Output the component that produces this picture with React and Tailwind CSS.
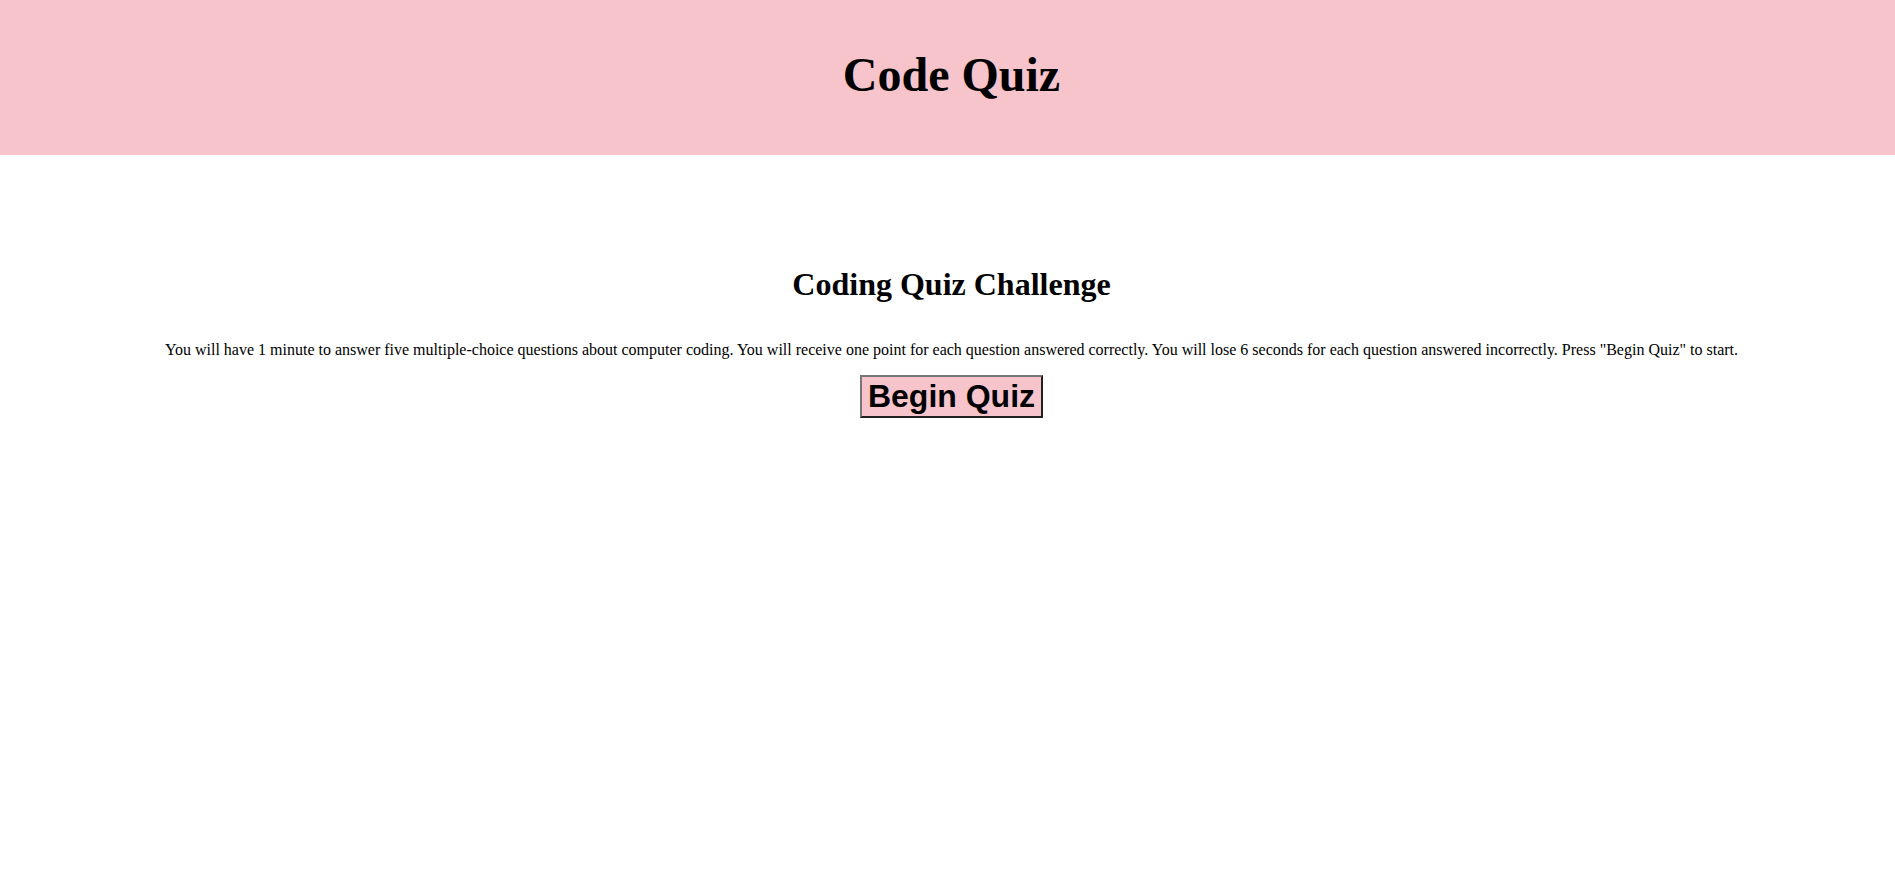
export default function App() {
  return (
    <div className="min-h-screen bg-white text-black font-['Liberation_Serif',serif]">
      {/* Header */}
      <header className="bg-[#f7c4cc] pt-[48px] pb-[54px] pl-2 text-center">
        <h1 className="text-[48px] leading-[53px] font-bold">Code Quiz</h1>
      </header>

      {/* Intro */}
      <main className="pt-[112px] pl-2 text-center">
        <h2 className="text-[32px] leading-[35px] font-bold">Coding Quiz Challenge</h2>
        <p className="mt-[39px] text-base leading-[18px] whitespace-nowrap">
          You will have 1 minute to answer five multiple-choice questions about computer coding. You will
          receive one point for each question answered correctly. You will lose 6 seconds for each question
          answered incorrectly. Press "Begin Quiz" to start.
        </p>
        <button className="mt-[16px] bg-[#f7c4cc] border-2 [border-style:outset] border-[#767676] px-[6px] py-px font-['Liberation_Sans',Arial,sans-serif] font-bold text-[32px] leading-[37px]">
          Begin Quiz
        </button>
      </main>
    </div>
  );
}
